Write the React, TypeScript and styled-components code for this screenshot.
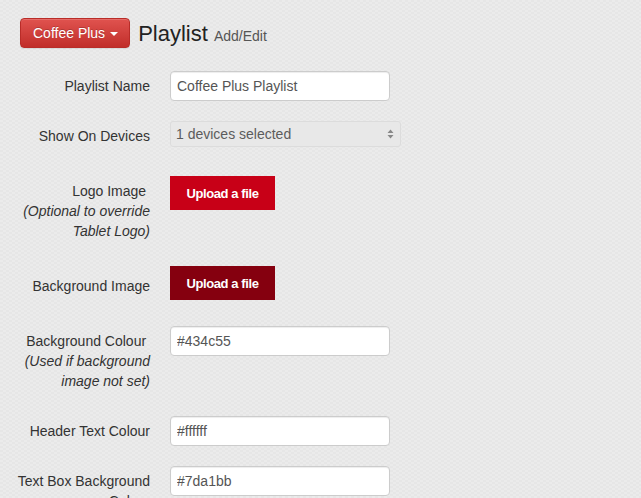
import styled, { createGlobalStyle } from 'styled-components'

const GlobalStyle = createGlobalStyle`
  html, body {
    margin: 0;
    padding: 0;
  }
  body {
    font-family: 'Liberation Sans', Arial, sans-serif;
    font-size: 14px;
    color: #333;
    background: repeating-conic-gradient(#e6e6e6 0 25%, #ebebeb 0 50%) 0 0 / 6px 4px;
    min-height: 498px;
    overflow: hidden;
  }
`

const Page = styled.div`
  width: 641px;
  height: 498px;
  overflow: hidden;
`

const Header = styled.div`
  display: flex;
  align-items: center;
  padding: 18px 0 0 20px;
  height: 30px;
`

const DropButton = styled.button`
  display: flex;
  align-items: center;
  gap: 5px;
  height: 30px;
  padding: 0 11px 0 12px;
  font-family: inherit;
  font-size: 14px;
  color: #fff;
  border: 1px solid #b92c28;
  border-radius: 4px;
  background-image: linear-gradient(to bottom, #e0534f 0, #c12e2a 100%);
  box-shadow: inset 0 1px 0 rgba(255, 255, 255, 0.15), 0 1px 1px rgba(0, 0, 0, 0.075);
  text-shadow: 0 -1px 0 rgba(0, 0, 0, 0.2);
`

const Caret = styled.span`
  width: 0;
  height: 0;
  border-top: 4px solid #fff;
  border-left: 4px solid transparent;
  border-right: 4px solid transparent;
  margin-top: 1px;
`

const Title = styled.h1`
  margin: 0 0 0 8px;
  font-size: 22px;
  font-weight: 400;
  color: #222;
  line-height: 1;
  padding-top: 2px;
`

const Sub = styled.small`
  font-size: 14px;
  color: #555;
`

const Form = styled.div`
  padding-top: 23px;
`

const Row = styled.div<{ $mb: number }>`
  display: grid;
  grid-template-columns: 150px 1fr;
  align-items: start;
  margin-bottom: ${p => p.$mb}px;
`

const Label = styled.label<{ $pt?: number }>`
  padding: ${p => p.$pt ?? 5}px 0 0 15px;
  text-align: right;
  line-height: 20px;
  font-size: 14px;
  color: #333;
`

const Hint = styled.em`
  display: block;
  font-style: italic;
`

const Control = styled.div`
  margin-left: 20px;
`

const TextInput = styled.input`
  box-sizing: border-box;
  width: 220px;
  height: 30px;
  padding: 0 6px;
  font-family: inherit;
  font-size: 14px;
  color: #555;
  background: #fff;
  border: 1px solid #ccc;
  border-radius: 4px;
  box-shadow: inset 0 1px 1px rgba(0, 0, 0, 0.075);
`

const Select = styled.div`
  box-sizing: border-box;
  width: 231px;
  height: 26px;
  display: flex;
  align-items: center;
  justify-content: space-between;
  padding: 0 6px 0 5px;
  font-size: 14px;
  color: #5c5c5c;
  background: #e8e8e8;
  border: 1px solid #dcdcdc;
  border-radius: 3px;
`

const UploadButton = styled.button<{ $dark?: boolean }>`
  width: 105px;
  height: 34px;
  border: 0;
  font-family: inherit;
  font-size: 13px;
  font-weight: 700;
  letter-spacing: -0.4px;
  color: #fff;
  background: ${p => (p.$dark ? '#85000f' : '#c80017')};
`

function SortIcon () {
  return (
    <svg width='7' height='10' viewBox='0 0 7 10'>
      <path d='M3.5 0.5 L6.5 4 H0.5 Z M3.5 9.5 L6.5 6 H0.5 Z' fill='#888' />
    </svg>
  )
}

function App () {
  return (
    <Page>
      <GlobalStyle />
      <Header>
        <DropButton>
          Coffee Plus <Caret />
        </DropButton>
        <Title>
          Playlist <Sub>Add/Edit</Sub>
        </Title>
      </Header>
      <Form>
        <Row $mb={20}>
          <Label>Playlist Name</Label>
          <Control>
            <TextInput defaultValue='Coffee Plus Playlist' />
          </Control>
        </Row>
        <Row $mb={29}>
          <Label>Show On Devices</Label>
          <Control>
            <Select>
              1 devices selected
              <SortIcon />
            </Select>
          </Control>
        </Row>
        <Row $mb={25}>
          <Label>
            Logo Image&nbsp;
            <Hint>(Optional to override Tablet Logo)</Hint>
          </Label>
          <Control>
            <UploadButton>Upload a file</UploadButton>
          </Control>
        </Row>
        <Row $mb={26}>
          <Label $pt={10}>Background Image</Label>
          <Control>
            <UploadButton $dark>Upload a file</UploadButton>
          </Control>
        </Row>
        <Row $mb={25}>
          <Label>
            Background Colour&nbsp;
            <Hint>(Used if background image not set)</Hint>
          </Label>
          <Control>
            <TextInput defaultValue='#434c55' />
          </Control>
        </Row>
        <Row $mb={20}>
          <Label>Header Text Colour</Label>
          <Control>
            <TextInput defaultValue='#ffffff' />
          </Control>
        </Row>
        <Row $mb={20}>
          <Label>Text Box Background Colour</Label>
          <Control>
            <TextInput defaultValue='#7da1bb' />
          </Control>
        </Row>
      </Form>
    </Page>
  )
}

export default App
